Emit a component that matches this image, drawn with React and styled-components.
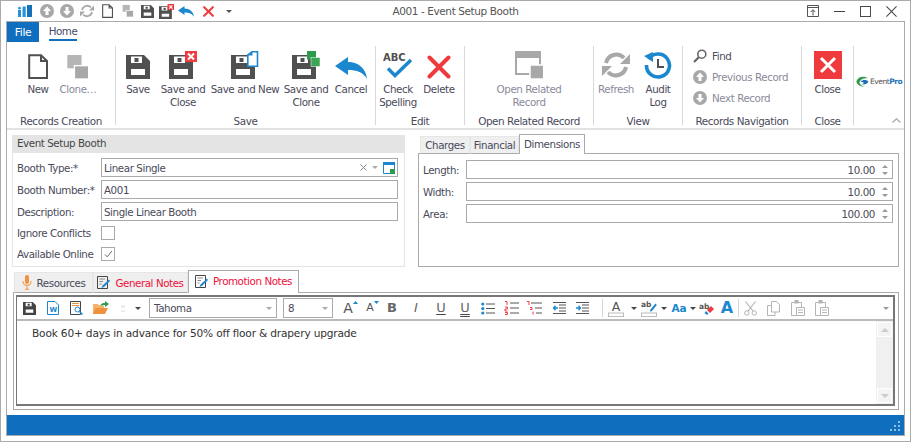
import React from 'react';
import styled, { createGlobalStyle } from 'styled-components';

const C = { dark: '#505050', gray: '#a8a8a8', blue: '#1b87cf', red: '#ef3b3e', green: '#2f9a4c', text: '#4a4a5a' };

const Global = createGlobalStyle`
  html, body { margin: 0; padding: 0; background: #fff; }
  body { font-family: "DejaVu Sans", "Noto Sans", sans-serif; font-size: 10.3px; letter-spacing: -0.42px; color: #444; }
`;

const DISK = 'M0 0H18L24 6V24H0Z M5 1.5V8H16V1.5Z M8.5 3H12.5V7H8.5Z M5 14V20H19V14Z';
const Svg = ({ s = 24, h, vb = '0 0 24 24', children }) => (
  <svg width={s} height={h || s} viewBox={vb} fill="none" style={{ display: 'block', flex: 'none' }}>{children}</svg>
);

const Glyph = styled.span`
  display: block; position: relative; flex: none; font-size: ${p => p.$size || 13}px; line-height: 16px; letter-spacing: 0;
  font-weight: ${p => (p.$b ? 700 : 400)}; font-style: ${p => (p.$i ? 'italic' : 'normal')}; color: ${p => p.$c || '#666'};
  text-decoration: ${p => (p.$u ? 'underline' : 'none')}; text-decoration-style: ${p => (p.$uu ? 'double' : 'solid')};
  text-decoration-color: #444; text-underline-offset: 1.5px; text-decoration-thickness: 1px;
`;
const GrowMark = styled.svg`position: absolute; top: 1px; right: -5px; display: block;`;

const I = {
  Disk: ({ s, c = C.dark }) => <Svg s={s}><path d={DISK} fill={c} fillRule="evenodd" /></Svg>,
  SaveClose: ({ s = 28 }) => (
    <Svg s={s} vb="0 0 28 28">
      <path d={DISK} fill={C.dark} fillRule="evenodd" transform="translate(0 4)" />
      <rect x="16" y="0" width="12" height="11" fill={C.red} />
      <path d="M19 2.5l6 6M25 2.5l-6 6" stroke="#fff" strokeWidth="2" />
    </Svg>
  ),
  SaveNew: () => (
    <Svg s={28} vb="0 0 28 28">
      <path d={DISK} fill={C.dark} fillRule="evenodd" transform="translate(0 4)" />
      <path d="M16.8 4L21 .8H26.5V15.2H16.8Z" fill="#fff" stroke={C.blue} strokeWidth="1.6" />
      <path d="M17 4.5H21.5V1L17 4.5Z" fill={C.blue} />
    </Svg>
  ),
  SaveClone: () => (
    <Svg s={28} vb="0 0 28 28">
      <path d={DISK} fill={C.dark} fillRule="evenodd" transform="translate(0 4)" />
      <rect x="15" y="-.5" width="9" height="9" fill={C.green} />
      <rect x="19" y="6.5" width="9" height="9" fill="#3aa655" stroke="#fff" strokeWidth=".5" />
    </Svg>
  ),
  Undo: ({ s = 32, h = 22 }) => (
    <Svg s={s} h={h} vb="0 0 32 22">
      <path d="M0 9L13 0V5C23 5 31 11 32 22C28 15 22 13 13 13V18Z" fill={C.blue} />
    </Svg>
  ),
  Page: ({ s = 20, h = 25, c = C.dark, w = 2 }) => (
    <Svg s={s} h={h} vb="0 0 20 25">
      <path d="M1.2 1.2H13L19 7V24H1.2ZM13 1.2V7H19" stroke={c} strokeWidth={w} />
    </Svg>
  ),
  Clone: ({ s = 24 }) => (
    <Svg s={s} vb="0 0 24 27">
      <rect x="0" y="0" width="16" height="15" fill="#b5b5b5" />
      <rect x="8" y="12" width="16" height="15" fill={C.gray} stroke="#fff" strokeWidth="1.5" />
    </Svg>
  ),
  Check: () => (
    <Svg s={30} h={28} vb="0 0 30 28">
      <text x="0" y="9.5" fontFamily="'DejaVu Sans', sans-serif" fontWeight="700" fontSize="10" letterSpacing="0" fill={C.dark}>ABC</text>
      <path d="M5 17.5L12 24.5L28 9" stroke={C.blue} strokeWidth="3.4" />
    </Svg>
  ),
  X: ({ s = 24, w = 4 }) => (
    <Svg s={s}><path d="M2.5 2.5L21.5 21.5M21.5 2.5L2.5 21.5" stroke={C.red} strokeWidth={w} strokeLinecap="round" /></Svg>
  ),
  Related: () => (
    <Svg s={28} vb="0 0 28 28">
      <rect x="1" y="1" width="24" height="22" stroke={C.gray} strokeWidth="2" />
      <rect x="0" y="0" width="26" height="7" fill={C.gray} />
      <rect x="15" y="14" width="14" height="14" fill={C.gray} stroke="#fff" strokeWidth="1.5" />
    </Svg>
  ),
  Refresh: ({ s = 28, c = C.gray, w = 4 }) => (
    <Svg s={s} vb="0 0 28 28">
      <path d="M4 12A10.5 10.5 0 0 1 22 7M24 16A10.5 10.5 0 0 1 6 21" stroke={c} strokeWidth={w} />
      <path d="M28 3V13H18ZM0 25V15H10Z" fill={c} />
    </Svg>
  ),
  Audit: () => (
    <Svg s={28} vb="0 0 28 28">
      <path d="M4.5 8A11.5 11.5 0 1 1 2.5 14" stroke={C.blue} strokeWidth="3.6" />
      <path d="M0 5L9 1L9 11Z" fill={C.blue} />
      <path d="M14 8V16H20" stroke={C.dark} strokeWidth="2" />
    </Svg>
  ),
  Find: () => (
    <Svg s={14} vb="0 0 14 14">
      <circle cx="8.8" cy="5.2" r="4" stroke="#666" strokeWidth="1.6" />
      <path d="M5.8 8.2L1 13" stroke="#666" strokeWidth="2.2" />
    </Svg>
  ),
  Circle: ({ s = 14, down }) => (
    <Svg s={s} vb="0 0 14 14">
      <circle cx="7" cy="7" r="7" fill={C.gray} />
      <path d={down ? 'M5.5 3H8.5V7H11L7 11.5L3 7H5.5Z' : 'M5.5 11H8.5V7H11L7 2.5L3 7H5.5Z'} fill="#fff" />
    </Svg>
  ),
  CloseBox: () => (
    <Svg s={28} vb="0 0 28 28">
      <rect width="28" height="28" fill={C.red} />
      <path d="M7 7L21 21M21 7L7 21" stroke="#fff" strokeWidth="3" />
    </Svg>
  ),
  Swoosh: () => (
    <Svg s={13} h={11} vb="0 0 13 11">
      <path d="M12 2.5C9 -.5 2 0 .5 5C0 8 4 11 9 10.5C5 10 2.5 7.5 4 5C6 2.5 9 2 12 2.5Z" fill={C.green} />
      <path d="M4.5 5.5C7 3.5 10.5 3.5 12.5 5.5C11.5 8 8 9 5 8C8 8 9.5 6.5 4.5 5.5Z" fill="#1c6fb5" />
    </Svg>
  ),
  AppLogo: () => (
    <Svg s={14} h={12} vb="0 0 14 12">
      <rect x="9" y="0" width="5" height="12" fill="#1572b6" />
      <rect x="4.5" y="1.5" width="3.2" height="10.5" fill="#2a93d5" />
      <rect x="0" y="5" width="3" height="7" fill="#2a93d5" />
      <circle cx="1.5" cy="3.2" r="1.4" fill="#2a93d5" />
    </Svg>
  ),
  Restore: () => (
    <Svg s={12} vb="0 0 12 12">
      <path d="M.5 .5H11.5V11.5H.5ZM.5 2.5H11.5" stroke="#555" />
      <path d="M6 10.5V5M3.8 7L6 4.7L8.2 7" stroke="#555" />
    </Svg>
  ),
  Min: () => <Svg s={11}><path d="M0 12H24" stroke="#444" strokeWidth="2.2" /></Svg>,
  Max: () => <Svg s={11}><rect x="1" y="1" width="22" height="22" stroke="#444" strokeWidth="2.2" /></Svg>,
  Shut: () => <Svg s={11}><path d="M1 1L23 23M23 1L1 23" stroke="#444" strokeWidth="2.2" /></Svg>,
  Mic: () => (
    <Svg s={10} h={15} vb="0 0 10 15">
      <rect x="3" y="0" width="4" height="9" rx="2" fill="#f2913d" />
      <path d="M1 6C1 9 3 10.5 5 10.5S9 9 9 6M5 10.5V14M3 14.3H7" stroke="#f2a765" strokeWidth="1.3" />
    </Svg>
  ),
  Note: () => (
    <Svg s={13} vb="0 0 13 13">
      <path d="M.5 .5H10.5V12.5H.5Z" stroke="#444" />
      <path d="M2.5 3H8M2.5 5.5H6M2.5 8H4.5" stroke="#888" />
      <path d="M12 3.5L13 5L7 11L4.5 12L5.5 9.5Z" fill={C.blue} />
    </Svg>
  ),
  Word: () => (
    <Svg s={12} h={14} vb="0 0 12 14">
      <path d="M.5 .5H8L11.5 4V13.5H.5Z" fill="#fff" stroke={C.blue} />
      <text x="2.5" y="10.5" fontFamily="'DejaVu Sans', sans-serif" fontWeight="700" fontSize="7" letterSpacing="0" fill={C.blue}>W</text>
    </Svg>
  ),
  Preview: () => (
    <Svg s={13} h={14} vb="0 0 13 14">
      <path d="M.5 .5H10.5V13.5H.5Z" stroke="#444" />
      <path d="M2 2.5H9M2 4.5H9" stroke="#f2913d" />
      <circle cx="7.5" cy="8.5" r="2.5" fill="#fff" stroke={C.blue} />
      <path d="M9.5 10.5L12.5 13.5" stroke={C.blue} strokeWidth="1.5" />
    </Svg>
  ),
  Folder: () => (
    <Svg s={16} h={14} vb="0 0 16 14">
      <path d="M0 3H5L6 4.5H11V13H0Z" fill="#f5b26a" />
      <path d="M2.5 7H15L12 13H0Z" fill="#f2913d" />
      <path d="M7 5C8 2.5 10 2 12 2V0L16 3L12 6V4C10 4 8.5 4 7 5Z" fill={C.green} />
    </Svg>
  ),
  Faint: () => <Svg s={6} h={9} vb="0 0 6 9"><path d="M1 1H5V4H1ZM1 6H5V8H1Z" fill="#ececec" /></Svg>,
  Grow: ({ small }) => (
    <Glyph $size={small ? 11 : 14} $c="#555">A
      <GrowMark width="5" height="3" viewBox="0 0 5 3"><path d={small ? 'M0 0H5L2.5 3Z' : 'M0 3H5L2.5 0Z'} fill={C.blue} /></GrowMark>
    </Glyph>
  ),
  Bullets: () => (
    <Svg s={14} h={13} vb="0 0 14 13">
      <circle cx="1.8" cy="2" r="1.6" fill={C.blue} /><circle cx="1.8" cy="6.5" r="1.6" fill={C.blue} /><circle cx="1.8" cy="11" r="1.6" fill={C.blue} />
      <path d="M5 2H14M5 6.5H14M5 11H14" stroke="#555" />
    </Svg>
  ),
  Numbers: () => (
    <Svg s={15} h={14} vb="0 0 15 14">
      <path d="M1 .5H3V4M1 6H3.5V8H1V10H3.5M1 11.5H3.5V13.5H1" stroke={C.red} />
      <path d="M6 2H15M6 7H15M6 12H15" stroke="#555" />
    </Svg>
  ),
  Multi: () => (
    <Svg s={15} h={14} vb="0 0 15 14">
      <path d="M0 .5H2V4M3 6.5H5V8.5H3M6 10.5V13.5" stroke={C.red} />
      <path d="M4 2H15M8 7H15M9 12H15" stroke="#555" />
    </Svg>
  ),
  Indent: ({ out }) => (
    <Svg s={13} h={12} vb="0 0 13 12">
      <path d="M0 .5H13M6 3H13M6 6H13M6 9H13M0 11.5H13" stroke="#555" />
      <path d={out ? 'M0 6H5M2.5 3.8L.5 6L2.5 8.2' : 'M0 6H4.5M2.5 3.8L4.5 6L2.5 8.2'} stroke={C.blue} strokeWidth="1.3" />
    </Svg>
  ),
  FontColor: () => (
    <Svg s={16} h={17} vb="0 0 16 17">
      <text x="8" y="11" textAnchor="middle" fontFamily="'DejaVu Sans', sans-serif" fontSize="12.5" letterSpacing="0" fill="#555">A</text>
      <rect x=".5" y="13" width="15" height="3.5" fill="#fff" stroke="#bbb" />
    </Svg>
  ),
  Highlight: () => (
    <Svg s={16} h={17} vb="0 0 16 17">
      <text x="0" y="7" fontFamily="'DejaVu Sans', sans-serif" fontWeight="700" fontSize="7.5" letterSpacing="0" fill="#555">ab</text>
      <path d="M14.5 3.5L15.8 5L11 11L9 11.8L9.5 9.5Z" fill={C.blue} />
      <rect x=".5" y="13" width="15" height="3.5" fill="#fff" stroke="#bbb" />
    </Svg>
  ),
  Eraser: () => (
    <Svg s={15} h={13} vb="0 0 15 13">
      <text x="0" y="7" fontFamily="'DejaVu Sans', sans-serif" fontWeight="700" fontSize="7.5" letterSpacing="0" fill="#555">ab</text>
      <path d="M8 8L12 4L15 7L11 11Z" fill={C.red} />
      <path d="M7 9L9.5 11.5L8 13L5.5 11Z" fill={C.blue} />
    </Svg>
  ),
  Scissors: () => (
    <Svg s={13} h={15} vb="0 0 13 15">
      <path d="M1.5 .5L9 10M11.5 .5L4 10" stroke="#b5b5b5" strokeWidth="1.2" />
      <circle cx="2.8" cy="12" r="2.2" stroke="#b5b5b5" /><circle cx="10.2" cy="12" r="2.2" stroke="#b5b5b5" />
    </Svg>
  ),
  Copy: () => (
    <Svg s={13} h={15} vb="0 0 13 15">
      <path d="M4.5 .5H9.5L12.5 3.5V11H4.5ZM.5 4.5H4.5M.5 4.5V14.5H8V11" stroke="#b5b5b5" />
    </Svg>
  ),
  Paste: () => (
    <Svg s={14} h={16} vb="0 0 14 16">
      <path d="M.5 2.5H10.5M.5 2.5V15.5H13.5V7.5H5.5V15.5M10.5 2.5V7.5" stroke="#b5b5b5" />
      <rect x="3.5" y="0" width="4" height="3.5" fill="#b5b5b5" />
      <path d="M7 10H12M7 12.5H12" stroke="#b5b5b5" />
    </Svg>
  ),
};

const Tri = styled.span`
  width: 0; height: 0; display: block; flex: none;
  border-left: ${p => p.$s || 3}px solid transparent;
  border-right: ${p => p.$s || 3}px solid transparent;
  border-top: ${p => p.$s || 3}px solid ${p => p.$c || '#555'};
`;

const Win = styled.div`
  width: 911px; height: 442px; box-sizing: border-box; border: 1px solid #aaa; padding: 0 5px 5px;
  display: flex; flex-direction: column; overflow: hidden; background: #fff;
`;
const TitleBar = styled.div`
  height: 20px; flex: none; display: grid; grid-template-columns: 1fr auto 1fr; align-items: center; margin: 0 -5px;
`;
const Qat = styled.div`display: flex; align-items: center; padding-left: 12px; height: 100%;`;
const QatSlot = styled.div`width: ${p => p.$w}px; display: flex; justify-content: center; align-items: center; flex: none;`;
const Title = styled.div`font-size: 10.5px; color: #555; text-align: center; letter-spacing: -0.4px;`;
const WinButtons = styled.div`display: flex; justify-content: flex-end; align-items: center; gap: 15px; padding-right: 13px;`;

const Frame = styled.div`flex: 1; min-height: 0; border: 1px solid #aaa; display: flex; flex-direction: column;`;
const TabRow = styled.div`height: 20px; display: flex; flex: none;`;
const FileTab = styled.div`
  width: 32px; background: #106ebe; color: #fff; display: flex; align-items: center; justify-content: center; font-size: 10.8px;
`;
const HomeTab = styled.div`
  margin-left: 10px; width: 28px; height: 19px; box-sizing: border-box; border-bottom: 2px solid #106ebe; color: #444a6a;
  display: flex; justify-content: center; align-items: center; white-space: nowrap;
`;
const Ribbon = styled.div`height: 88px; flex: none; display: flex; box-sizing: border-box; border-bottom: 2px solid #e2e2e2; position: relative;`;
const Group = styled.div`
  width: ${p => p.$w}px; flex: none; box-sizing: border-box; display: flex; flex-direction: column; align-items: stretch;
  margin-top: 4px; height: 79px; border-right: ${p => (p.$last ? 'none' : '1px solid #d8d8d8')};
`;
const GroupBody = styled.div`flex: 1; display: flex; padding-left: ${p => p.$pl || 0}px; justify-content: ${p => p.$center ? 'center' : 'flex-start'};`;
const GroupLabel = styled.div`height: 14px; line-height: 14px; margin-bottom: -3px; text-align: center; color: #4a4a5a; white-space: nowrap; font-size: 10.4px;`;
const Big = styled.div`
  width: ${p => p.$w}px; flex: none; display: flex; flex-direction: column; align-items: center; color: ${p => p.$off ? '#8a8a9a' : '#4a4a5a'};
`;
const BigIcon = styled.div`height: 33px; padding-top: 2px; box-sizing: border-box; display: flex; align-items: flex-end; justify-content: center;`;
const BigLabel = styled.div`margin-top: 3.5px; line-height: 13px; text-align: center; white-space: pre;`;
const NavList = styled.div`display: flex; flex-direction: column; padding: 3px 0 0 10px; gap: 7px;`;
const NavItem = styled.div`display: flex; align-items: center; gap: 5px; height: 14px; white-space: nowrap; color: ${p => p.$off ? '#8a8a9a' : '#4a4a5a'};`;
const LogoWrap = styled.div`display: flex; align-items: center; padding: 30px 0 0 2px; gap: 1px;`;
const LogoText = styled.span`font-size: 7.5px; letter-spacing: -0.45px; color: #555; white-space: nowrap; b { color: #1c6fb5; font-weight: 700; }`;
const Collapse = styled.svg`position: absolute; right: 3px; bottom: 5px;`;

const Content = styled.div`flex: 1; min-height: 0; display: flex; flex-direction: column; padding: 5px;`;
const TopRow = styled.div`display: flex; height: 132px; gap: 13px; flex: none;`;
const Card = styled.div`width: 393px; box-sizing: border-box; border: 1px solid #e4e4e4; flex: none;`;
const CardHead = styled.div`height: 18px; background: #e4e4e4; line-height: 17px; padding-left: 5px; margin: -1px -1px 0;`;
const Form = styled.div`display: flex; flex-direction: column; padding: 5px 6px 0 4px; gap: 3px;`;
const Row = styled.div`display: flex; align-items: center; height: 19px;`;
const Lbl = styled.div`width: ${p => p.$w || 84}px; flex: none; white-space: nowrap; color: #4a4a5a;`;
const Input = styled.div`
  flex: 1; height: 19px; box-sizing: border-box; border: 1px solid #aaa; display: flex; align-items: center; padding: 0 2px 0 2px; color: #4a4a5a;
  justify-content: ${p => p.$num ? 'flex-end' : 'space-between'};
`;
const InputTools = styled.div`display: flex; align-items: center; gap: 5px;`;
const Cross = styled.svg`display: block;`;
const Check = styled.div`width: 14px; height: 14px; box-sizing: border-box; border: 1px solid #aaa; display: flex; align-items: center; justify-content: center;`;
const CheckRow = styled(Row)`margin-top: -1px;`;

const RightPane = styled.div`flex: 1; display: flex; flex-direction: column; min-width: 0;`;
const Tabs = styled.div`display: flex; align-items: flex-end; flex: none; height: ${p => p.$h}px; padding-left: ${p => p.$pl}px; position: relative; z-index: 1;`;
const Tab = styled.div`
  box-sizing: border-box; width: ${p => p.$w}px; height: ${p => p.$on ? p.$h + 2 : p.$h}px; display: flex; align-items: center; justify-content: center; gap: 5px; white-space: nowrap;
  background: ${p => p.$on ? '#fff' : '#efefef'}; border: 1px solid ${p => p.$on ? '#aaa' : '#e6e6e6'}; border-bottom: ${p => p.$on ? 'none' : '1px solid #aaa'};
  color: ${p => p.$red ? '#f0103c' : '#4a4a5a'}; padding-bottom: ${p => p.$on ? 2 : 0}px;
`;
const TabPanel = styled.div`flex: 1; border: 1px solid #aaa; margin-top: -1px; box-sizing: border-box; padding: 6px 5px 0 4px; display: flex; flex-direction: column; gap: 3px;`;
const Spin = styled.div`display: flex; flex-direction: column; gap: 4px; margin: 0 2px 0 7px;`;
const SpinUp = styled(Tri)`border-top: none; border-bottom: 3px solid #999;`;

const Lower = styled.div`flex: 1; min-height: 0; display: flex; flex-direction: column; margin: 4px 0 0 1px;`;
const NotesPanel = styled.div`flex: 1; min-height: 0; border: 1px solid #aaa; margin-top: -1px; padding: 2px 3px 3px 2px; display: flex;`;
const Editor = styled.div`flex: 1; min-width: 0; border: 2px solid #777; border-width: 2px 2px 2px 1px; display: flex; flex-direction: column;`;
const Toolbar = styled.div`height: 22px; flex: none; display: flex; align-items: center; border-bottom: 2px solid #bbb;`;
const Tool = styled.div`width: ${p => p.$w}px; flex: none; display: flex; align-items: center; justify-content: center;`;
const Combo = styled.div`
  width: ${p => p.$w}px; height: 20px; box-sizing: border-box; border: 1px solid #aaa; flex: none; display: flex; align-items: center; justify-content: space-between;
  padding: 0 4px; margin-right: ${p => p.$mr}px; color: #4a4a5a;
`;
const Sep = styled.div`width: 1px; height: 18px; background: #d5d5d5; flex: none;`;
const Spacer = styled.div`flex: 1;`;
const EditArea = styled.div`flex: 1; min-height: 0; display: flex;`;
const Doc = styled.div`
  flex: 1; padding: 5px 0 0 15px; font-size: 10.6px; letter-spacing: -0.18px; color: #333; white-space: nowrap; line-height: 14px;
`;
const Scroll = styled.div`width: 17px; background: #f0f0f0; flex: none; display: flex; flex-direction: column; justify-content: space-between;`;
const ScrollBtn = styled.div`
  height: 15px; background: #f4f4f4; border: 1px solid #fff; box-sizing: border-box; margin: 1px; display: flex; align-items: center; justify-content: center;
`;
const ScrollUp = styled(Tri)`border-top: none; border-bottom: 4px solid #ccc;`;

const Status = styled.div`
  height: 20px; box-sizing: border-box; background: #106ebe; flex: none; display: flex; justify-content: flex-end; align-items: flex-end; padding: 0 3px 3px 0;
`;

const BigBtn = ({ w, off, icon, label }) => (
  <Big $w={w} $off={off}><BigIcon>{icon}</BigIcon><BigLabel>{label}</BigLabel></Big>
);

const quick = [
  [<I.AppLogo />, 24], [<I.Circle />, 20], [<I.Circle down />, 20], [<I.Refresh s={14} w={3.6} />, 20],
  [<I.Page s={11} h={14} w={2} />, 21], [<I.Clone s={12} />, 19], [<I.Disk s={13} />, 20], [<I.SaveClose s={15} />, 19],
  [<I.Undo s={16} h={11} />, 20], [<I.X s={11} w={4.5} />, 24],
];

const tools = [
  [<I.Disk s={13} c="#444" />, 24], [<I.Word />, 24], [<I.Preview />, 23], [<I.Folder />, 26], [<I.Faint />, 18], [<Tri $c="#444" />, 12],
];
const tools2 = [
  [<I.Grow />, 24], [<I.Grow small />, 20], [<Glyph $b>B</Glyph>, 24], [<Glyph $i>I</Glyph>, 24], [<Glyph $u>U</Glyph>, 26],
  [<Glyph $u $uu>U</Glyph>, 22], [<I.Bullets />, 24], [<I.Numbers />, 22], [<I.Multi />, 24], [<I.Indent out />, 26], [<I.Indent />, 20],
];
const tools3 = [
  [<I.FontColor />, 26], [<Tri $c="#444" />, 9], [<I.Highlight />, 21], [<Tri $c="#444" />, 10],
  [<Glyph $size={10.5} $b $c={C.blue}>Aa</Glyph>, 20], [<Tri $c="#444" />, 7],
  [<I.Eraser />, 20], [<Glyph $size={16} $b $c={C.blue}>A</Glyph>, 22],
];
const tools4 = [[<I.Scissors />, 22], [<I.Copy />, 24], [<I.Paste />, 25], [<I.Paste />, 24]];
const renderTools = list => list.map(([node, w], i) => <Tool key={i} $w={w}>{node}</Tool>);

const NumRow = ({ label, value }) => (
  <Row>
    <Lbl $w={43}>{label}</Lbl>
    <Input $num>{value}<Spin><SpinUp /><Tri $c="#999" /></Spin></Input>
  </Row>
);

export default function App() {
  return (
    <>
      <Global />
      <Win>
        <TitleBar>
          <Qat>
            {quick.map(([n, w], i) => <QatSlot key={i} $w={w}>{n}</QatSlot>)}
            <QatSlot $w={18}><Tri $c="#555" /></QatSlot>
          </Qat>
          <Title>A001 - Event Setup Booth</Title>
          <WinButtons><I.Restore /><I.Min /><I.Max /><I.Shut /></WinButtons>
        </TitleBar>
        <Frame>
          <TabRow>
            <FileTab>File</FileTab>
            <HomeTab>Home</HomeTab>
          </TabRow>
          <Ribbon>
            <Group $w={109}>
              <GroupBody $pl={11}>
                <BigBtn w={40} icon={<I.Page />} label="New" />
                <BigBtn w={40} off icon={<I.Clone />} label="Clone…" />
              </GroupBody>
              <GroupLabel>Records Creation</GroupLabel>
            </Group>
            <Group $w={260}>
              <GroupBody $pl={4}>
                <BigBtn w={36} icon={<I.Disk />} label="Save" />
                <BigBtn w={54} icon={<I.SaveClose />} label={'Save and\nClose'} />
                <BigBtn w={70} icon={<I.SaveNew />} label="Save and New" />
                <BigBtn w={52} icon={<I.SaveClone />} label={'Save and\nClone'} />
                <BigBtn w={38} icon={<I.Undo />} label="Cancel" />
              </GroupBody>
              <GroupLabel>Save</GroupLabel>
            </Group>
            <Group $w={89}>
              <GroupBody $pl={2}>
                <BigBtn w={40} icon={<I.Check />} label={'Check\nSpelling'} />
                <BigBtn w={42} icon={<I.X />} label="Delete" />
              </GroupBody>
              <GroupLabel>Edit</GroupLabel>
            </Group>
            <Group $w={129}>
              <GroupBody $center>
                <BigBtn w={100} off icon={<I.Related />} label={'Open Related\nRecord'} />
              </GroupBody>
              <GroupLabel>Open Related Record</GroupLabel>
            </Group>
            <Group $w={89}>
              <GroupBody $pl={2}>
                <BigBtn w={40} off icon={<I.Refresh />} label="Refresh" />
                <BigBtn w={44} icon={<I.Audit />} label={'Audit\nLog'} />
              </GroupBody>
              <GroupLabel>View</GroupLabel>
            </Group>
            <Group $w={119}>
              <GroupBody>
                <NavList>
                  <NavItem><I.Find />Find</NavItem>
                  <NavItem $off><I.Circle />Previous Record</NavItem>
                  <NavItem $off><I.Circle down />Next Record</NavItem>
                </NavList>
              </GroupBody>
              <GroupLabel>Records Navigation</GroupLabel>
            </Group>
            <Group $w={52}>
              <GroupBody $center>
                <BigBtn w={50} icon={<I.CloseBox />} label="Close" />
              </GroupBody>
              <GroupLabel>Close</GroupLabel>
            </Group>
            <Group $w={50} $last>
              <LogoWrap><I.Swoosh /><LogoText>Event<b>Pro</b></LogoText></LogoWrap>
            </Group>
            <Collapse width="9" height="5" viewBox="0 0 9 5" fill="none"><path d="M.5 4.5L4.5 .8L8.5 4.5" stroke="#aaa" strokeWidth="1.3" /></Collapse>
          </Ribbon>
          <Content>
            <TopRow>
              <Card>
                <CardHead>Event Setup Booth</CardHead>
                <Form>
                  <Row>
                    <Lbl>Booth Type:*</Lbl>
                    <Input>
                      Linear Single
                      <InputTools>
                        <Cross width="7" height="7" viewBox="0 0 7 7" fill="none"><path d="M.5 .5L6.5 6.5M6.5 .5L.5 6.5" stroke="#888" /></Cross>
                        <Tri $c="#aaa" />
                        <svg width="12" height="12" viewBox="0 0 12 12" fill="none" style={{ display: 'block' }}>
                          <path d="M.5 .5H11.5V8M.5 .5V11.5H7" stroke="#1b87cf" /><rect x="0" y="0" width="12" height="3" fill="#1b87cf" /><rect x="7" y="7" width="5" height="5" fill="#2f9a4c" />
                        </svg>
                      </InputTools>
                    </Input>
                  </Row>
                  <Row><Lbl>Booth Number:*</Lbl><Input>A001</Input></Row>
                  <Row><Lbl>Description:</Lbl><Input>Single Linear Booth</Input></Row>
                  <CheckRow><Lbl>Ignore Conflicts</Lbl><Check /></CheckRow>
                  <CheckRow><Lbl>Available Online</Lbl>
                    <Check><svg width="9" height="8" viewBox="0 0 9 8" fill="none"><path d="M1 4.5L3.2 6.8L8 1" stroke="#666" /></svg></Check>
                  </CheckRow>
                </Form>
              </Card>
              <RightPane>
                <Tabs $h={19} $pl={2}>
                  <Tab $w={50} $h={18}>Charges</Tab>
                  <Tab $w={49} $h={18}>Financial</Tab>
                  <Tab $w={66} $h={18} $on>Dimensions</Tab>
                </Tabs>
                <TabPanel>
                  <NumRow label="Length:" value="10.00" />
                  <NumRow label="Width:" value="10.00" />
                  <NumRow label="Area:" value="100.00" />
                </TabPanel>
              </RightPane>
            </TopRow>
            <Lower>
              <Tabs $h={22} $pl={1}>
                <Tab $w={79} $h={21}><I.Mic />Resources</Tab>
                <Tab $w={95} $h={21} $red><I.Note />General Notes</Tab>
                <Tab $w={111} $h={21} $on $red><I.Note />Promotion Notes</Tab>
              </Tabs>
              <NotesPanel>
                <Editor>
                  <Toolbar>
                    {renderTools(tools)}
                    <Tool $w={5} />
                    <Combo $w={128} $mr={6}>Tahoma<Tri $c="#aaa" /></Combo>
                    <Combo $w={50} $mr={3}>8<Tri $c="#aaa" /></Combo>
                    {renderTools(tools2)}
                    <Tool $w={10} />
                    <Sep />
                    {renderTools(tools3)}
                    <Sep />
                    {renderTools(tools4)}
                    <Spacer />
                    <Tool $w={14}><Tri $c="#999" /></Tool>
                  </Toolbar>
                  <EditArea>
                    <Doc>Book 60+ days in advance for 50% off floor &amp; drapery upgrade</Doc>
                    <Scroll>
                      <ScrollBtn><ScrollUp $s={4} /></ScrollBtn>
                      <ScrollBtn><Tri $s={4} $c="#ccc" /></ScrollBtn>
                    </Scroll>
                  </EditArea>
                </Editor>
              </NotesPanel>
            </Lower>
          </Content>
          <Status>
            <svg width="11" height="11" viewBox="0 0 11 11" fill="#8fbde3" style={{ display: 'block' }}>
              <rect x="8" y="0" width="2" height="2" /><rect x="4" y="4" width="2" height="2" /><rect x="8" y="4" width="2" height="2" />
              <rect x="0" y="8" width="2" height="2" /><rect x="4" y="8" width="2" height="2" /><rect x="8" y="8" width="2" height="2" />
            </svg>
          </Status>
        </Frame>
      </Win>
    </>
  );
}
